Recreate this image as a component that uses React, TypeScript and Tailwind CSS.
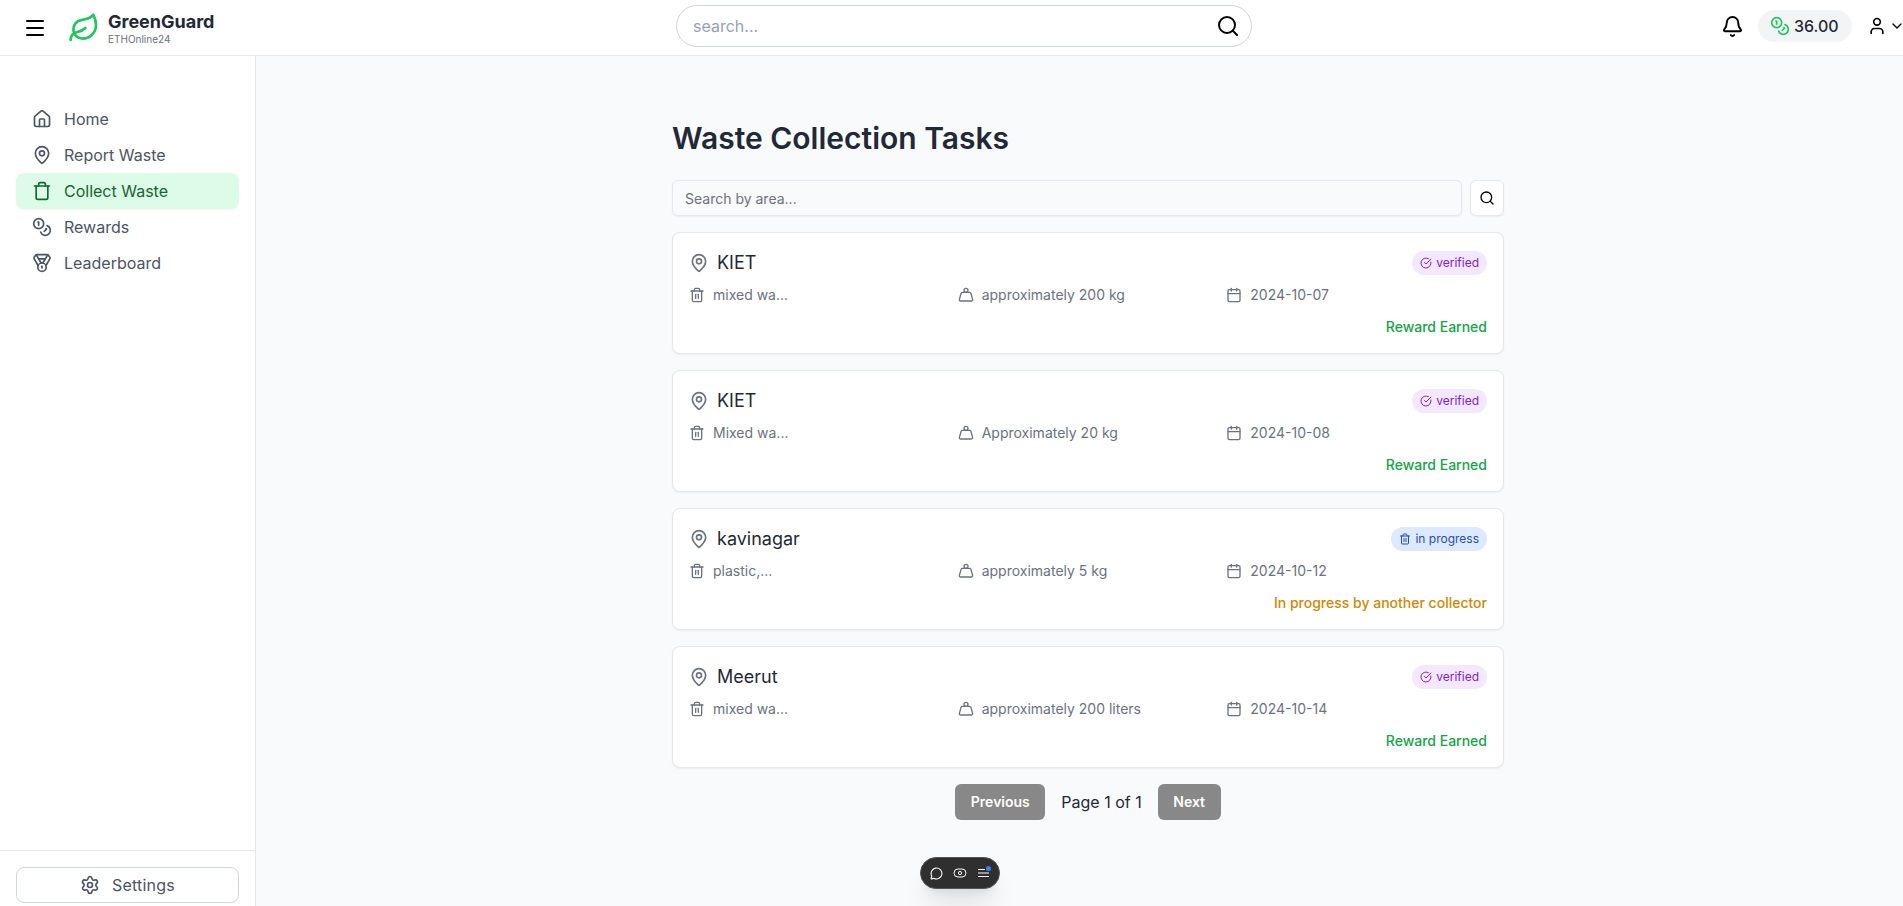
import React from "react";
import {
  Bell,
  Calendar,
  ChevronDown,
  CircleCheckBig,
  Coins,
  Home,
  Leaf,
  MapPin,
  Medal,
  Menu,
  MessageCircle,
  Search,
  Settings,
  Trash,
  Trash2,
  User,
  Weight,
} from "lucide-react";

const navItems = [
  { label: "Home", icon: Home },
  { label: "Report Waste", icon: MapPin },
  { label: "Collect Waste", icon: Trash, active: true },
  { label: "Rewards", icon: Coins },
  { label: "Leaderboard", icon: Medal },
];

const tasks = [
  { place: "KIET", type: "mixed wa...", amount: "approximately 200 kg", date: "2024-10-07", status: "verified" },
  { place: "KIET", type: "Mixed wa...", amount: "Approximately 20 kg", date: "2024-10-08", status: "verified" },
  { place: "kavinagar", type: "plastic,...", amount: "approximately 5 kg", date: "2024-10-12", status: "in progress" },
  { place: "Meerut", type: "mixed wa...", amount: "approximately 200 liters", date: "2024-10-14", status: "verified" },
];

const Header = () => (
  <header className="h-14 shrink-0 bg-white border-b border-gray-200 flex items-center pl-[22px]">
    <div className="flex items-center w-[654px] shrink-0">
      <Menu className="w-6 h-6 text-black ml-[1px] mr-[21px]" />
      <Leaf className="w-8 h-8 text-[#22c55e] mr-2" />
      <div className="flex flex-col">
        <span className="text-lg leading-[22px] font-bold text-[#1f2937]">GreenGuard</span>
        <span className="text-[10px] leading-3 text-[#6b7280]">ETHOnline24</span>
      </div>
    </div>
    <div className="relative w-[576px] shrink-0 mb-1">
      <input
        placeholder="search..."
        className="w-full h-[42px] px-4 rounded-full border border-gray-300 bg-white text-base placeholder:text-gray-400 outline-none"
      />
      <Search className="absolute right-3 top-[9px] w-6 h-6 text-black" />
    </div>
    <div className="flex-1 flex items-center justify-end mb-[3px]">
      <Bell className="w-[23px] h-[23px] text-black" />
      <div className="ml-[14px] mr-[15px] h-8 w-[94px] rounded-full bg-gray-100 flex items-center pl-3">
        <Coins className="w-5 h-5 text-[#22c55e] mr-1" />
        <span className="text-base font-medium text-[#1f2937]">36.00</span>
      </div>
      <User className="w-5 h-5 text-black" />
      <ChevronDown className="w-4 h-4 text-black ml-[2px] -mr-[2px]" />
    </div>
  </header>
);

const Sidebar = () => (
  <aside className="w-64 shrink-0 bg-white border-r border-gray-200 flex flex-col">
    <nav className="flex-1 pt-[45px] px-4">
      {navItems.map((item) => {
        const Icon = item.icon;
        return (
          <div
            key={item.label}
            className={
              item.active
                ? "h-9 flex items-center px-4 rounded-lg bg-[#dcfce7] text-[#166534] shadow-xs"
                : "h-9 flex items-center px-4 text-[#4b5563]"
            }
          >
            <Icon className="w-5 h-5 mr-3" />
            <span className="text-base">{item.label}</span>
          </div>
        );
      })}
    </nav>
    <div className="border-t border-gray-200 px-4 pt-4 pb-[3px]">
      <div className="h-9 rounded-lg border border-gray-300 flex items-center justify-center text-[#4b5563]">
        <Settings className="w-5 h-5 mr-3" />
        <span className="text-base tracking-[0.2px]">Settings</span>
      </div>
    </div>
  </aside>
);

const StatusBadge = ({ status }: { status: string }) =>
  status === "verified" ? (
    <span className="px-2 py-1 rounded-full bg-[#f3e8ff] text-[#7e22ce] text-xs flex items-center">
      <CircleCheckBig className="w-3 h-3 mr-1" />
      verified
    </span>
  ) : (
    <span className="px-2 py-1 rounded-full bg-[#dbeafe] text-[#2b4bb8] text-xs flex items-center">
      <Trash2 className="w-3 h-3 mr-1" />
      in progress
    </span>
  );

const TaskCard = ({ task }: { task: (typeof tasks)[number] }) => (
  <div className="bg-white rounded-lg border border-gray-200 shadow-xs p-4 mb-4">
    <div className="flex items-center justify-between mb-2">
      <h2 className="text-lg font-normal text-[#1f2937] flex items-center">
        <MapPin className="w-5 h-5 mr-2 text-[#6b7280]" />
        {task.place}
      </h2>
      <StatusBadge status={task.status} />
    </div>
    <div className="grid grid-cols-3 gap-2 text-sm text-[#6b7280] mb-3">
      <div className="flex items-center">
        <Trash2 className="w-4 h-4 mr-2" />
        <span>{task.type}</span>
      </div>
      <div className="flex items-center">
        <Weight className="w-4 h-4 mr-2" />
        <span>{task.amount}</span>
      </div>
      <div className="flex items-center">
        <Calendar className="w-4 h-4 mr-2" />
        <span>{task.date}</span>
      </div>
    </div>
    <div className="flex justify-end text-sm font-medium">
      {task.status === "verified" ? (
        <span className="text-[#16a34a]">Reward Earned</span>
      ) : (
        <span className="text-[#ca8a04]">In progress by another collector</span>
      )}
    </div>
  </div>
);

const Toolbar = () => (
  <div className="absolute left-[920px] top-[857px] w-20 h-8 rounded-full bg-[#2f2f2f] border border-[#555] shadow-xl flex items-center justify-center gap-[10px] text-white">
    <MessageCircle className="w-[13px] h-[13px]" />
    <svg viewBox="0 0 14 12" className="w-[14px] h-3" fill="none" stroke="currentColor" strokeWidth="1">
      <rect x="1" y="2" width="12" height="8" rx="4" />
      <circle cx="7" cy="6" r="1.6" />
    </svg>
    <div className="relative w-[13px] h-3">
      <svg viewBox="0 0 13 12" className="w-[13px] h-3" fill="none" stroke="currentColor" strokeWidth="1.2">
        <path d="M1 2.5h7M1 6h11M1 9.5h11" />
      </svg>
      <span className="absolute -right-[1px] -top-[1px] w-[5px] h-[5px] rounded-full bg-[#3b82f6]" />
    </div>
  </div>
);

const App = () => {
  return (
    <div className="relative h-[906px] w-full overflow-hidden flex flex-col bg-[#f9fafb] font-['Inter',sans-serif]">
      <Header />
      <div className="flex flex-1 min-h-0">
        <Sidebar />
        <main className="flex-1 pt-16 pl-[416px]">
          <div className="w-[832px]">
            <h1 className="text-3xl font-semibold text-[#1f2937] mb-6">Waste Collection Tasks</h1>
            <div className="flex items-center mb-4 gap-2">
              <input
                placeholder="Search by area..."
                className="flex-1 h-9 px-3 text-sm rounded-md border border-gray-200 bg-[#f9fafb] shadow-xs placeholder:text-[#6b7280] outline-none"
              />
              <div className="w-[34px] h-9 shrink-0 rounded-md border border-gray-200 bg-white shadow-xs flex items-center justify-center">
                <Search className="w-4 h-4 text-black" />
              </div>
            </div>
            {tasks.map((task, i) => (
              <TaskCard key={i} task={task} />
            ))}
            <div className="flex items-center justify-center">
              <div className="h-9 w-[90px] rounded-md bg-[#888888] text-white text-sm font-semibold flex items-center justify-center">Previous</div>
              <span className="mx-4 text-base text-[#1f2937]">Page 1 of 1</span>
              <div className="h-9 w-[63px] rounded-md bg-[#888888] text-white text-sm font-semibold flex items-center justify-center">Next</div>
            </div>
          </div>
        </main>
      </div>
      <Toolbar />
    </div>
  );
};

export default App;
